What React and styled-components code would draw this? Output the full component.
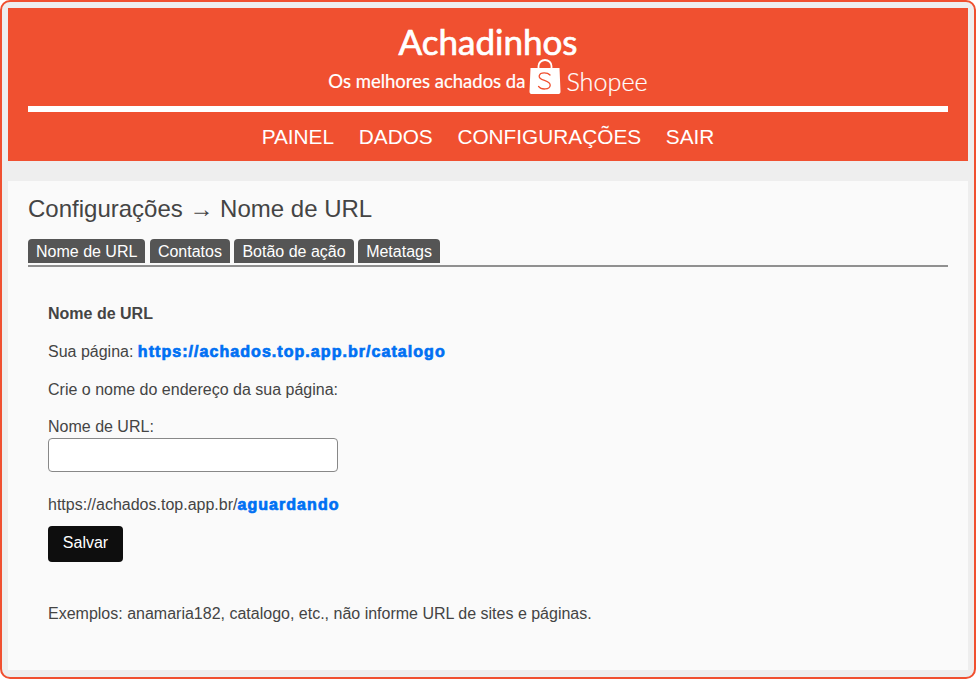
import React from 'react';
import styled, { createGlobalStyle } from 'styled-components';

const GlobalStyle = createGlobalStyle`
  html, body {
    margin: 0;
    padding: 0;
    background: #ffffff;
  }
  body {
    font-family: "Liberation Sans", Arial, sans-serif;
    font-size: 16px;
    color: #444;
  }
`;

const Frame = styled.div`
  box-sizing: border-box;
  width: 976px;
  height: 679px;
  padding: 6px;
  overflow: hidden;
  background-color: #eeeeee;
  border: 2px solid #f05030;
  border-radius: 10px;
`;

const Header = styled.header`
  box-sizing: border-box;
  height: 153px;
  padding: 13px 20px 0;
  background-color: #f05030;
  color: #fff;
  text-align: center;
`;

const Brand = styled.div`
  font-family: Lato, sans-serif;
  font-size: 35px;
  line-height: 40px;
  font-weight: 400;
  -webkit-text-stroke: 0.7px #fff;
`;

const Slogan = styled.div`
  display: flex;
  align-items: flex-end;
  justify-content: center;
  height: 35px;
  margin-top: -2px;
  font-family: Lato, sans-serif;
  font-size: 18.5px;
  font-weight: 400;
`;

const SloganText = styled.span`
  line-height: 26px;
  -webkit-text-stroke: 0.2px #fff;
`;

const ShopeeWord = styled.span`
  margin-left: 5px;
  font-family: Lato, sans-serif;
  font-size: 25.2px;
  line-height: 26px;
  font-weight: 300;
  -webkit-text-stroke: 0.2px #fff;
`;

const Bag = styled.svg`
  width: 32px;
  height: 35px;
  margin-left: 4px;
`;

const Rule = styled.div`
  height: 6px;
  margin-top: 12px;
  background-color: #fff;
`;

const Nav = styled.nav`
  display: flex;
  justify-content: center;
  gap: 24.7px;
  margin-top: 13px;
`;

const NavLink = styled.a`
  color: #fff;
  font-size: 20.8px;
  line-height: 24px;
  text-decoration: none;
`;

const Content = styled.main`
  box-sizing: border-box;
  height: 489px;
  margin-top: 20px;
  padding: 14px 20px 0;
  background-color: #fafafa;
`;

const Title = styled.h1`
  margin: 0;
  font-size: 24px;
  line-height: 28px;
  font-weight: 400;
  color: #444;
`;

const Tabs = styled.div`
  display: flex;
  gap: 4.5px;
  margin-top: 16px;
  padding-bottom: 2px;
  border-bottom: 2px solid #909090;
`;

const Tab = styled.a`
  height: 18px;
  padding: 4px 8px 2px;
  line-height: 18px;
  color: #fff;
  background-color: #555;
  border-radius: 4px 4px 0 0;
`;

const Panel = styled.section`
  padding: 38px 20px 0;
`;

const Line = styled.p`
  margin: 0 0 ${(props) => props.$gap || 20}px;
  line-height: 18px;
`;

const Strong = styled.strong`
  font-weight: 700;
`;

const Accent = styled.a`
  color: #0070f3;
  font-weight: 700;
  letter-spacing: 1.05px;
  text-decoration: none;
  -webkit-text-stroke: 0.7px #0070f3;
`;

const Field = styled.label`
  display: block;
  line-height: 18px;
`;

const Input = styled.input`
  display: block;
  box-sizing: border-box;
  width: 290px;
  height: 34px;
  margin: 2px 0 24px;
  background: #fff;
  border: 1px solid #888;
  border-radius: 4px;
`;

const SaveButton = styled.button`
  display: block;
  width: 75px;
  height: 36px;
  padding: 0 0 2px;
  font: inherit;
  color: #fff;
  background-color: #0e0e0e;
  border: none;
  border-radius: 4px;
`;

const Examples = styled.p`
  margin: 43px 0 0;
  line-height: 18px;
`;

const ShopeeBag = () => (
  <Bag viewBox="0 0 32 35" aria-hidden="true">
    <path
      d="M1.500 9h29l1 23.200A2.700 2.700 0 0 1 28.800 35H3.200A2.700 2.700 0 0 1 .5 32.200Z"
      fill="#fff"
    />
    <path
      d="M9.500 9V7a6.500 6 0 0 1 13 0v2"
      fill="none"
      stroke="#fff"
      strokeWidth="1.800"
    />
    <path
      d="M21 16c-2.200-2.600-9.800-3.400-10.800.8-1.100 5 11.300 4.200 11 9.400-.3 4.600-8.800 5-11.700 1.200"
      fill="none"
      stroke="#f05030"
      strokeWidth="1.300"
      strokeLinecap="round"
    />
  </Bag>
);

const App = () => (
  <>
    <GlobalStyle />
    <Frame>
      <Header>
        <Brand>Achadinhos</Brand>
        <Slogan>
          <SloganText>Os melhores achados da</SloganText>
          <ShopeeBag />
          <ShopeeWord>Shopee</ShopeeWord>
        </Slogan>
        <Rule />
        <Nav>
          <NavLink href="#">PAINEL</NavLink>
          <NavLink href="#">DADOS</NavLink>
          <NavLink href="#">CONFIGURAÇÕES</NavLink>
          <NavLink href="#">SAIR</NavLink>
        </Nav>
      </Header>
      <Content>
        <Title>Configurações → Nome de URL</Title>
        <Tabs>
          <Tab>Nome de URL</Tab>
          <Tab>Contatos</Tab>
          <Tab>Botão de ação</Tab>
          <Tab>Metatags</Tab>
        </Tabs>
        <Panel>
          <Line><Strong>Nome de URL</Strong></Line>
          <Line>Sua página: <Accent href="#">https://achados.top.app.br/catalogo</Accent></Line>
          <Line $gap={19}>Crie o nome do endereço da sua página:</Line>
          <Field htmlFor="url">Nome de URL:</Field>
          <Input id="url" type="text" />
          <Line $gap={12}>https://achados.top.app.br/<Accent>aguardando</Accent></Line>
          <SaveButton>Salvar</SaveButton>
          <Examples>Exemplos: anamaria182, catalogo, etc., não informe URL de sites e páginas.</Examples>
        </Panel>
      </Content>
    </Frame>
  </>
);

export default App;
